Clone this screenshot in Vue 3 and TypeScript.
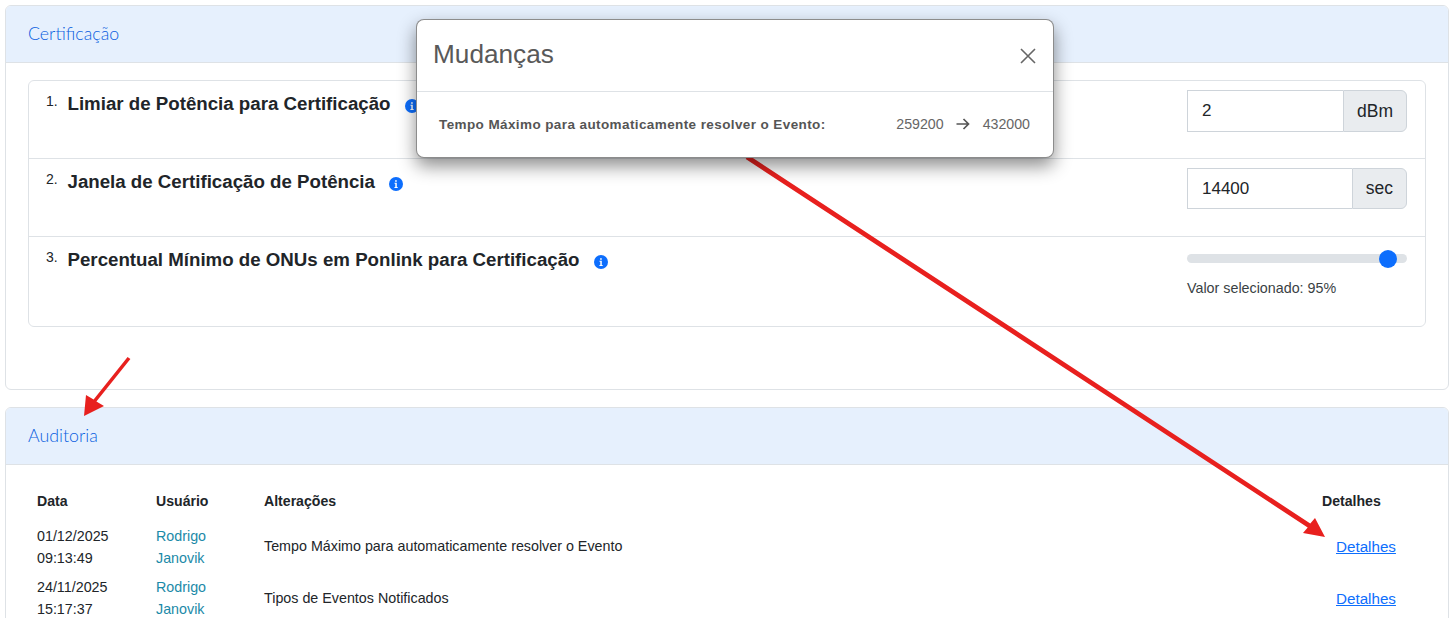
<script setup lang="ts">
interface Setting { title: string; unit?: string; value?: string }
const settings: Setting[] = [
  { title: 'Limiar de Potência para Certificação', unit: 'dBm', value: '2' },
  { title: 'Janela de Certificação de Potência', unit: 'sec', value: '14400' },
  { title: 'Percentual Mínimo de ONUs em Ponlink para Certificação' },
]
const audits = [
  { date: '01/12/2025', time: '09:13:49', change: 'Tempo Máximo para automaticamente resolver o Evento' },
  { date: '24/11/2025', time: '15:17:37', change: 'Tipos de Eventos Notificados' },
]
</script>

<template>
  <div class="page">
    <section class="card first">
      <header class="card-head">Certificação</header>
      <div class="card-body">
        <ol class="list">
          <li v-for="(s, i) in settings" :key="s.title" class="row" :class="'row' + i">
            <div class="label">
              <span class="num">{{ i + 1 }}.</span>
              <span class="title">{{ s.title }}</span>
              <svg class="info" viewBox="0 0 16 16"><circle cx="8" cy="8" r="8" fill="#0d6efd" /><path d="M6.3 6.6h2.6v4.7h1v1.2H6.2v-1.2h1V7.8h-.9zM7 3.6h1.9v1.8H7z" fill="#fff" /></svg>
            </div>
            <div class="control">
              <div v-if="s.unit" class="group">
                <input class="field" :value="s.value" readonly />
                <span class="addon">{{ s.unit }}</span>
              </div>
              <template v-else>
                <div class="slider"><span class="thumb"></span></div>
                <div class="slider-text">Valor selecionado: 95%</div>
              </template>
            </div>
          </li>
        </ol>
      </div>
    </section>

    <section class="card second">
      <header class="card-head">Auditoria</header>
      <div class="table">
        <div class="th">Data</div>
        <div class="th">Usuário</div>
        <div class="th">Alterações</div>
        <div class="th">Detalhes</div>
        <template v-for="a in audits" :key="a.date">
          <div class="td">{{ a.date }}<br />{{ a.time }}</div>
          <div class="td user">Rodrigo<br />Janovik</div>
          <div class="td">{{ a.change }}</div>
          <div class="td"><a class="link" href="#">Detalhes</a></div>
        </template>
      </div>
    </section>

    <svg class="arrows" width="1453" height="618" viewBox="0 0 1453 618">
      <g fill="#e8201e" stroke="none">
        <path d="M127.6 356.9 L130.4 359.1 L96.4 401.6 L104 406 L84 416 L86 395 L93.6 399.4 Z" />
        <path d="M748.3 155 L745.7 159 L1307.7 527.5 L1303 533 L1325 537 L1315 518 L1310.3 523.5 Z" />
      </g>
    </svg>

    <div class="modal">
      <div class="modal-head">
        <span class="modal-title">Mudanças</span>
        <svg class="close" viewBox="0 0 16 16"><path d="M1 1l14 14M15 1L1 15" stroke="#666" stroke-width="1.6" fill="none" /></svg>
      </div>
      <div class="modal-body">
        <span class="change-label">Tempo Máximo para automaticamente resolver o Evento:</span>
        <span class="change-values">
          <span>259200</span>
          <svg class="to" viewBox="0 0 16 16"><path d="M1.5 8h12M8.5 3l5 5-5 5" stroke="#555" stroke-width="1.7" fill="none" /></svg>
          <span>432000</span>
        </span>
      </div>
    </div>
  </div>
</template>

<style>
html, body { margin: 0; background: #fff; overflow: hidden; }
</style>

<style scoped>
.page {
  position: relative;
  width: 1453px;
  height: 618px;
  overflow: hidden;
  padding: 5px 4px 0 5px;
  box-sizing: border-box;
  font-family: "Liberation Sans", Arial, sans-serif;
  color: #212529;
  background: #fff;
}
.card {
  border: 1px solid #dee2e6;
  border-radius: 6px;
  background: #fff;
  overflow: hidden;
}
.first { height: 385px; box-sizing: border-box; }
.second { margin-top: 17px; height: 260px; }
.card-head {
  height: 57px;
  padding: 0 0 2px 22px;
  display: flex;
  align-items: center;
  box-sizing: border-box;
  background: #e6f0fd;
  border-bottom: 1px solid #dee2e6;
  font-family: Lato, sans-serif;
  font-weight: 300;
  font-size: 17.8px;
  color: #0a5fe0;
}
.card-body { padding: 17px 22px 0; }
.list {
  list-style: none;
  margin: 0;
  padding: 0;
  border: 1px solid #dee2e6;
  border-radius: 6px;
}
.row {
  display: flex;
  justify-content: space-between;
  box-sizing: border-box;
  height: 78px;
  border-bottom: 1px solid #dee2e6;
  padding: 9px 18px 0 17px;
}
.row2 { height: 89px; border-bottom: none; }
.label { display: flex; align-items: flex-start; }
.num { font-size: 14px; width: 21.5px; line-height: 16px; margin-top: 3px; color: #212529; }
.title { font-size: 18.7px; font-weight: 700; line-height: 27px; color: #212529; }
.info { width: 14px; height: 14px; margin: 9px 0 0 14.5px; }
.control { width: 220px; }
.group { display: flex; height: 41px; }
.row0 .group { height: 42px; }
.field {
  flex: 1 1 0;
  min-width: 0;
  box-sizing: border-box;
  height: 100%;
  border: 1px solid #ced4da;
  border-right: none;
  padding: 0 14px;
  font: 17px "Liberation Sans", Arial, sans-serif;
  color: #212529;
  outline: none;
  border-radius: 0;
}
.addon {
  display: flex;
  align-items: center;
  padding: 0 13px;
  background: #e9ecef;
  border: 1px solid #ced4da;
  border-radius: 0 6px 6px 0;
  font-size: 17.5px;
  color: #212529;
}
.slider {
  position: relative;
  height: 9px;
  margin-top: 8px;
  background: #dee2e6;
  border-radius: 5px;
}
.thumb {
  position: absolute;
  width: 18px;
  height: 18px;
  right: 10px;
  top: -4.5px;
  background: #0d6efd;
  border-radius: 50%;
}
.slider-text { margin-top: 16px; font-size: 14.3px; color: #3a3f44; line-height: 18px; }
.table {
  display: grid;
  grid-template-columns: 119px 108px 1058px 1fr;
  padding: 25px 22px 0 22px;
  font-size: 14.3px;
}
.th {
  padding: 0 9px;
  font-weight: 700;
  font-size: 14.1px;
  height: 22px;
  line-height: 22px;
  margin-bottom: 12.5px;
  color: #212529;
}
.td {
  padding: 0 9px;
  line-height: 22px;
  height: 51.5px;
  display: flex;
  flex-direction: column;
  justify-content: flex-start;
  white-space: nowrap;
}
.td:nth-child(4n+3), .td:nth-child(4n+4) { line-height: 43px; }
.td:nth-child(n+11) { line-height: 45px; }
.user { color: #1b8aa8; }
.link { color: #0d6efd; font-size: 15.2px; margin-left: 14px; }
.arrows { position: absolute; left: 0; top: 0; pointer-events: none; }
.modal {
  position: absolute;
  left: 416px;
  top: 19px;
  width: 638px;
  height: 139px;
  box-sizing: border-box;
  background: #fff;
  border: 1px solid rgba(0, 0, 0, 0.45);
  border-radius: 8px;
  box-shadow: 0 8px 18px rgba(0, 0, 0, 0.45);
}
.modal-head {
  display: flex;
  justify-content: space-between;
  align-items: center;
  height: 72px;
  box-sizing: border-box;
  padding: 0 17px 2px 16px;
  border-bottom: 1px solid #dee2e6;
}
.modal-title { font-size: 26.2px; color: #595959; }
.close { width: 16px; height: 16px; margin-top: 2px; }
.modal-body {
  display: flex;
  justify-content: space-between;
  align-items: center;
  height: 64px;
  padding: 0 23px 0 22px;
  color: #555;
}
.change-label { font-size: 13.5px; font-weight: 700; letter-spacing: 0.4px; }
.change-values { display: flex; align-items: center; gap: 11.5px; font-size: 14.2px; color: #666; }
.to { width: 16px; height: 16px; }
</style>
